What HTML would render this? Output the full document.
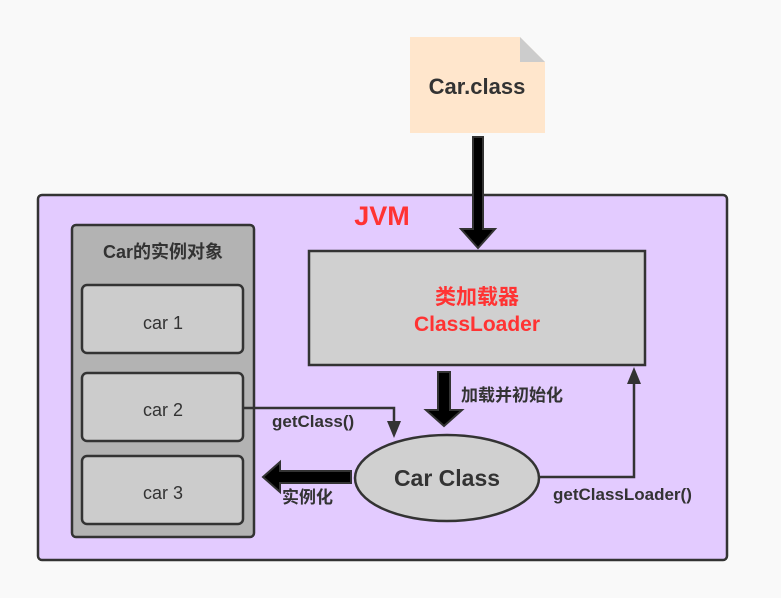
<!DOCTYPE html><html><head><meta charset="utf-8"><style>body{margin:0;background:#f9f9f9}svg{display:block}text{font-family:"Liberation Sans","Noto Sans CJK SC",sans-serif;font-weight:bold}</style></head><body>
<svg width="781" height="598" viewBox="0 0 781 598">
<rect width="781" height="598" fill="#f9f9f9"/>
<path d="M410 37H520L545 62V133H410Z" fill="#ffe6cc"/>
<path d="M520 37L545 62H520Z" fill="#ccc"/>
<text x="477" y="94" font-size="22" fill="#333" text-anchor="middle">Car.class</text>
<rect x="38" y="195" width="689" height="365" rx="4" fill="#e3cbff" stroke="#333" stroke-width="2.5"/>
<text x="382" y="225" font-size="27" fill="#ff3333" text-anchor="middle">JVM</text>
<path d="M473 137H483V229H495L478 248L461 229H473Z" fill="#000" stroke="#333" stroke-width="2"/>
<rect x="72" y="225" width="182" height="312" rx="4" fill="#b3b3b3" stroke="#333" stroke-width="2.5"/>
<text x="163" y="258" font-size="18" fill="#333" text-anchor="middle">Car的实例对象</text>
<rect x="82" y="285" width="161" height="68" rx="5" fill="#ccc" stroke="#333" stroke-width="2.5"/>
<rect x="82" y="373" width="161" height="68" rx="5" fill="#ccc" stroke="#333" stroke-width="2.5"/>
<rect x="82" y="456" width="161" height="68" rx="5" fill="#ccc" stroke="#333" stroke-width="2.5"/>
<text x="163" y="329" font-size="18" fill="#333" text-anchor="middle" style="font-weight:normal">car 1</text>
<text x="163" y="416" font-size="18" fill="#333" text-anchor="middle" style="font-weight:normal">car 2</text>
<text x="163" y="499" font-size="18" fill="#333" text-anchor="middle" style="font-weight:normal">car 3</text>
<rect x="309" y="251" width="336" height="114" fill="#d0d0d0" stroke="#333" stroke-width="2.5"/>
<text x="477" y="304" font-size="21" fill="#ff3333" text-anchor="middle">类加载器</text>
<text x="477" y="331" font-size="21" fill="#ff3333" text-anchor="middle">ClassLoader</text>
<path d="M438 372H450V410H462L444 426L426 410H438Z" fill="#000" stroke="#333" stroke-width="2"/>
<text x="461" y="401" font-size="17" fill="#333">加载并初始化</text>
<path d="M243 408H394V424" fill="none" stroke="#333" stroke-width="2.5"/>
<path d="M387 421H401L394 438Z" fill="#333"/>
<text x="272" y="427" font-size="17" fill="#333">getClass()</text>
<ellipse cx="447" cy="478" rx="92" ry="43" fill="#d0d0d0" stroke="#333" stroke-width="2.5"/>
<text x="447" y="486" font-size="23" fill="#333" text-anchor="middle">Car Class</text>
<path d="M539 477H634V380" fill="none" stroke="#333" stroke-width="2.5"/>
<path d="M627 384H641L634 367Z" fill="#333"/>
<text x="553" y="500" font-size="17" fill="#333">getClassLoader()</text>
<path d="M351 471V483H280V492L263 477L280 462V471Z" fill="#000" stroke="#333" stroke-width="2"/>
<text x="282" y="503" font-size="17" fill="#333">实例化</text>
</svg></body></html>
